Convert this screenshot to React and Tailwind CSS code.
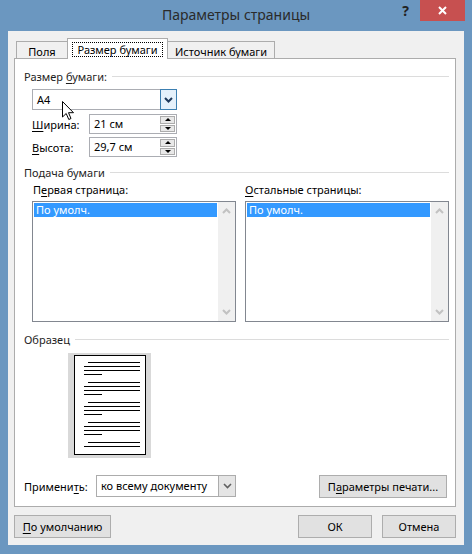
import React from 'react';

const U = ({ children }) => <span className="underline underline-offset-[2px]">{children}</span>;

const Chevron = ({ dir = 'down', color = '#1e395b', w = 9, h = 6, sw = 2 }) => (
  <svg width={w} height={h} viewBox="0 0 9 6" className="block">
    <path
      d={dir === 'down' ? 'M1 1 L4.5 4.5 L8 1' : 'M1 5 L4.5 1.5 L8 5'}
      fill="none"
      stroke={color}
      strokeWidth={sw}
    />
  </svg>
);

const GroupHeader = ({ children, className = '' }) => (
  <div className={`flex items-center h-[16px] ${className}`}>
    <span className="whitespace-nowrap text-[#1e1e1e]">{children}</span>
    <div className="flex-1 h-px bg-[#dcdcdc] ml-[5px]" />
  </div>
);

const SpinInput = ({ value }) => (
  <div className="w-[88px] h-[20px] border border-[#abadb3] bg-white flex">
    <div className="flex-1 pl-[4px] leading-[18px]">{value}</div>
    <div className="w-[17px] flex flex-col p-[1px] gap-px">
      <div className="flex-1 bg-[#e8e8e8] border border-[#acacac] flex items-center justify-center">
        <div className="w-0 h-0 border-l-[3px] border-r-[3px] border-b-[3px] border-l-transparent border-r-transparent border-b-black" />
      </div>
      <div className="flex-1 bg-[#e8e8e8] border border-[#acacac] flex items-center justify-center">
        <div className="w-0 h-0 border-l-[3px] border-r-[3px] border-t-[3px] border-l-transparent border-r-transparent border-t-black" />
      </div>
    </div>
  </div>
);

const ListBox = () => (
  <div className="h-[121px] border border-[#828790] bg-white flex">
    <div className="flex-1 p-px">
      <div className="h-[14px] bg-[#3399ff] text-white leading-[13px] pl-[2px]">По умолч.</div>
    </div>
    <div className="w-[17px] bg-[#f0f0f0] flex flex-col items-center justify-between py-[6px]">
      <Chevron dir="up" color="#c2c2c2" w={9} h={6} sw={2} />
      <Chevron dir="down" color="#c2c2c2" w={9} h={6} sw={2} />
    </div>
  </div>
);

const Preview = () => {
  const groups = [9, 29, 49, 69];
  return (
    <svg width="83" height="105" viewBox="0 0 83 105" className="block" shapeRendering="crispEdges">
      <rect x="0" y="0" width="83" height="105" fill="#d9d9d9" />
      <rect x="6.5" y="2.5" width="71" height="99" fill="#fff" stroke="#000" strokeWidth="1.5" />
      {groups.map((g) => (
        <g key={g} stroke="#000" strokeWidth="1">
          <line x1="20" y1={g + 0.5} x2="72" y2={g + 0.5} />
          <line x1="16" y1={g + 4.5} x2="72" y2={g + 4.5} />
          <line x1="16" y1={g + 8.5} x2="72" y2={g + 8.5} />
          <line x1="16" y1={g + 12.5} x2="34" y2={g + 12.5} />
        </g>
      ))}
      <g stroke="#000" strokeWidth="1">
        <line x1="20" y1="89.5" x2="72" y2="89.5" />
        <line x1="16" y1="93.5" x2="72" y2="93.5" />
      </g>
    </svg>
  );
};

const Button = ({ children, className = '' }) => (
  <div className={`h-[23px] border border-[#adadad] bg-[#e1e1e1] flex items-center justify-center ${className}`}>
    {children}
  </div>
);

export default function App() {
  return (
    <div className="relative w-[472px] h-[554px] bg-[#6b97c0] flex flex-col font-['Noto_Sans',sans-serif] text-[11px] text-black leading-none">
      {/* title bar */}
      <div className="relative h-[31px] flex items-center justify-center">
        <span className="text-[14px] text-[#2a2a2a] -mt-[2px]">Параметры страницы</span>
        <div className="absolute right-[7px] top-0 flex items-start">
          <span className="text-[14px] font-bold text-[#222] mt-[4px] mr-[11px]">?</span>
          <div className="w-[45px] h-[21px] bg-[#c75050] flex items-center justify-center">
            <svg width="9" height="9" viewBox="0 0 9 9">
              <path d="M1 1 L8 8 M8 1 L1 8" stroke="#fff" strokeWidth="2" />
            </svg>
          </div>
        </div>
      </div>

      {/* client area */}
      <div className="mx-[8px] mb-[9px] flex-1 bg-[#f0f0f0] flex flex-col pl-[6px] pr-[8px] pt-[7px]">
        {/* tabs */}
        <div className="flex items-end h-[20px]">
          <div className="ml-[2px] w-[51px] h-[17px] border-l border-t border-[#acacac] flex items-center justify-center pt-[2px]">
            Поля
          </div>
          <div className="relative z-10 w-[101px] h-[21px] -mb-px border-l border-t border-r border-[#acacac] bg-white flex items-center justify-center">
            <div className="w-[91px] border border-dotted border-black h-[15px] flex items-center justify-center">Размер бумаги</div>
          </div>
          <div className="w-[107px] h-[17px] border-t border-r border-[#acacac] flex items-center justify-center pt-[2px]">
            Источник бумаги
          </div>
        </div>

        {/* panel */}
        <div className="h-[449px] border border-[#acacac] bg-white pl-[9px] pr-[6px] flex flex-col">
          <GroupHeader className="mt-[9px]">
            Размер <U>б</U>умаги:
          </GroupHeader>

          <div className="ml-[8px] mt-[5px] w-[145px] h-[21px] border border-[#abadb3] flex">
            <div className="flex-1 pl-[4px] leading-[19px]">A4</div>
            <div className="w-[17px] -my-px -mr-px border border-[#3c7fb1] bg-[#e5f1fb] flex items-center justify-center">
              <Chevron />
            </div>
          </div>

          <div className="ml-[8px] mt-[4px] flex items-center">
            <span className="w-[57px]"><U>Ш</U>ирина:</span>
            <SpinInput value="21 см" />
          </div>
          <div className="ml-[8px] mt-[3px] flex items-center">
            <span className="w-[57px]"><U>В</U>ысота:</span>
            <SpinInput value="29,7 см" />
          </div>

          <GroupHeader className="mt-[7px]">Подача бумаги</GroupHeader>

          <div className="ml-[8px] mt-[4px] flex gap-[9px]">
            <div className="w-[204px] flex flex-col">
              <div className="h-[17px] pl-px">П<U>е</U>рвая страница:</div>
              <ListBox />
            </div>
            <div className="w-[204px] flex flex-col">
              <div className="h-[17px]"><U>О</U>стальные страницы:</div>
              <ListBox />
            </div>
          </div>

          <GroupHeader className="mt-[9px]">Образец</GroupHeader>

          <div className="ml-[44px] mt-[6px]">
            <Preview />
          </div>

          <div className="mt-[17px] flex items-center h-[22px]">
            <span className="w-[72px]">Примени<U>т</U>ь:</span>
            <div className="w-[140px] h-[22px] border border-[#acacac] bg-white flex">
              <div className="flex-1 pl-[4px] leading-[20px]">ко всему документу</div>
              <div className="w-[17px] bg-[#e5e5e5] border-l border-[#acacac] flex items-center justify-center">
                <Chevron color="#606060" sw={1.6} />
              </div>
            </div>
            <div className="flex-1" />
            <Button className="w-[128px] h-[22px] mr-[2px]">
              П<U>а</U>раметры печати...
            </Button>
          </div>
        </div>

        {/* bottom buttons */}
        <div className="mt-[8px] flex">
          <Button className="w-[97px]">
            <U>П</U>о умолчанию
          </Button>
          <div className="flex-1" />
          <Button className="w-[74px] border-[#3399ff]">ОК</Button>
          <Button className="w-[74px] ml-[10px]">Отмена</Button>
        </div>
      </div>

      {/* mouse cursor */}
      <svg
        className="absolute left-[62px] top-[101px]"
        width="13"
        height="20"
        viewBox="0 0 13 20"
      >
        <path
          d="M0.5 0.5 L0.5 16 L4.2 12.5 L6.8 18.5 L9 17.5 L6.5 11.7 L11.5 11.7 Z"
          fill="#fff"
          stroke="#000"
          strokeWidth="1"
          strokeLinejoin="miter"
        />
      </svg>
    </div>
  );
}
